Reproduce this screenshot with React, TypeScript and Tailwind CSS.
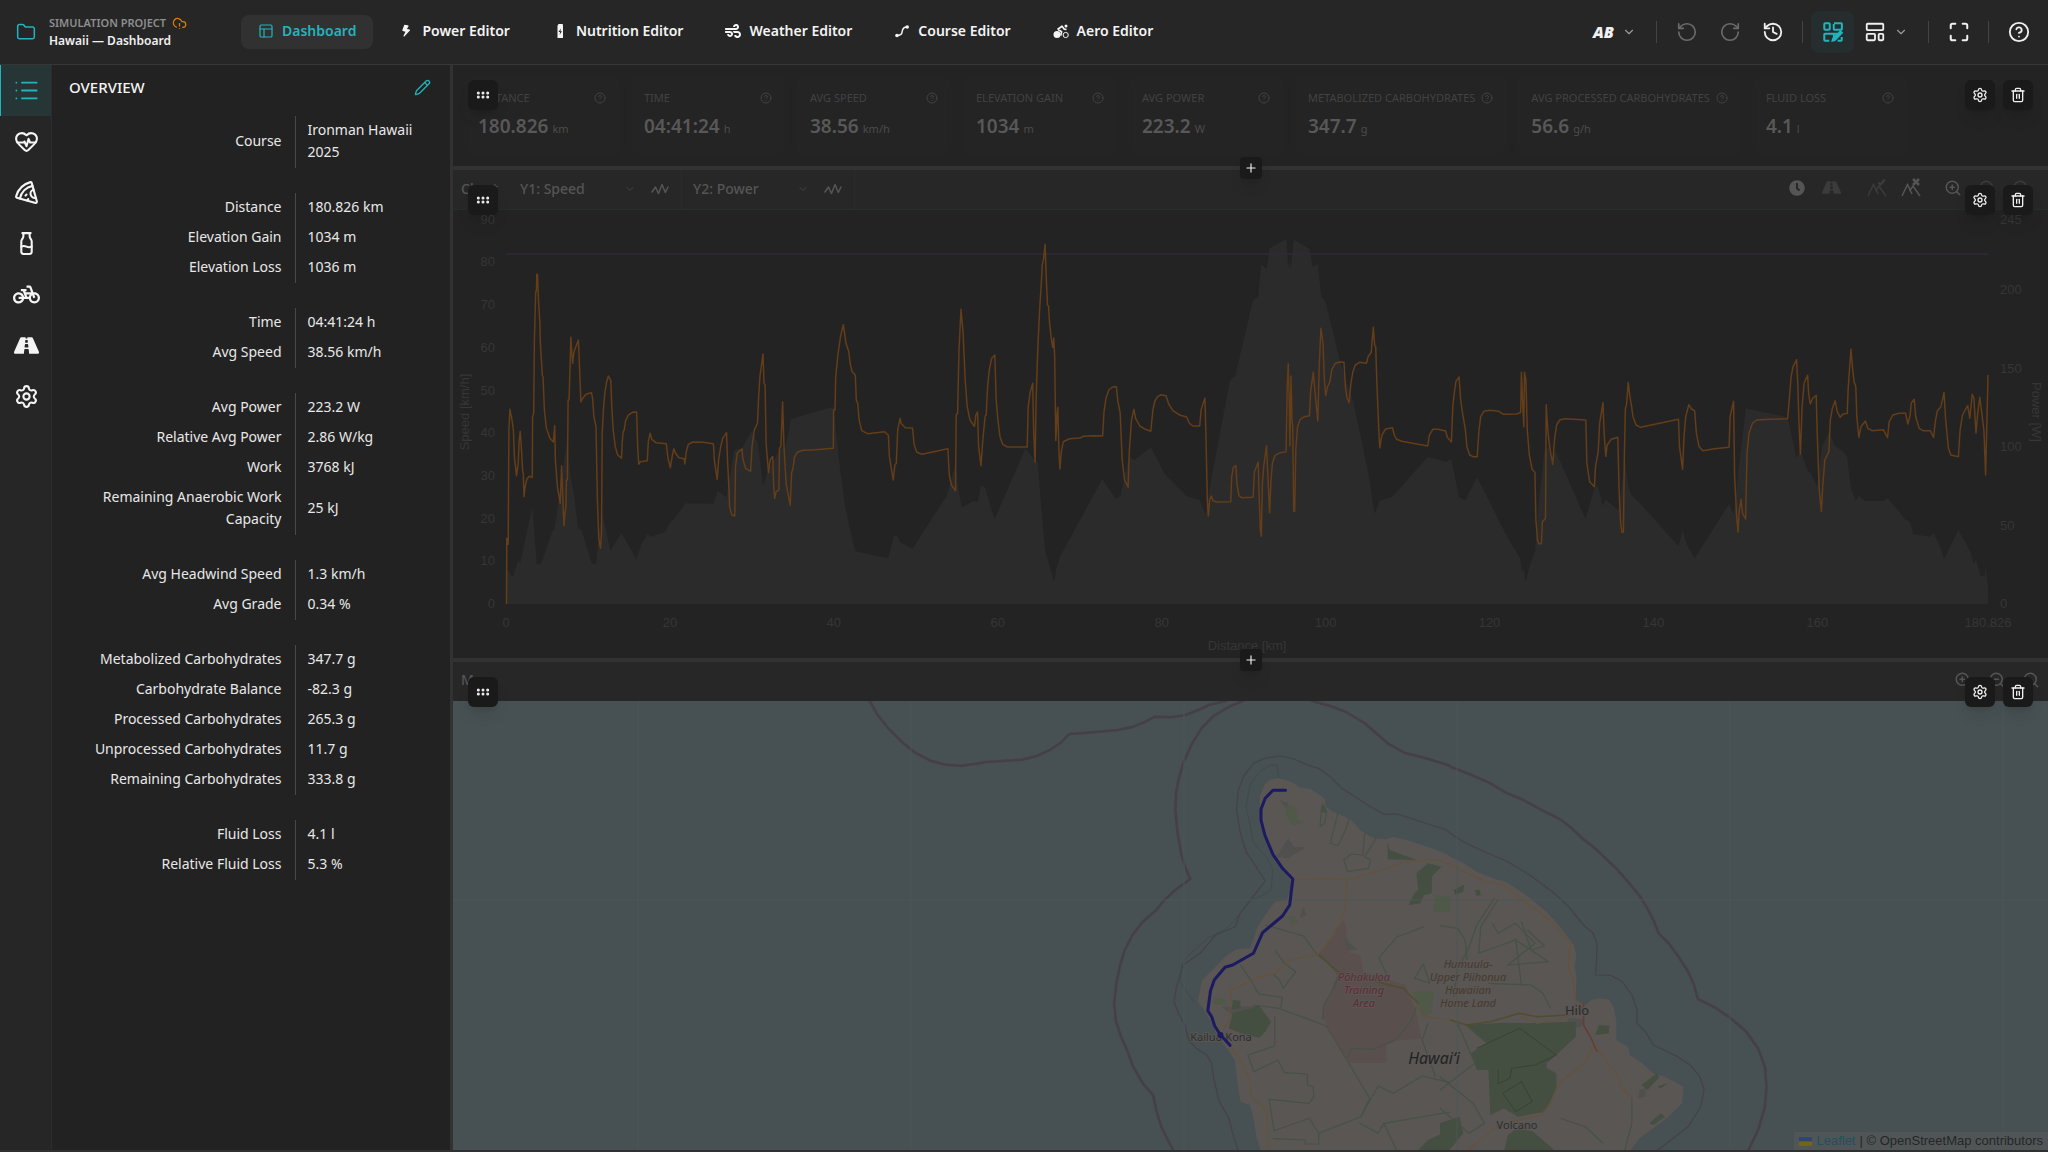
import type { ReactNode } from "react";
import {
  Folder, CloudAlert, PanelsTopLeft, List, HeartPulse, Pizza, Milk, Settings, Pencil, ChevronDown,
  RotateCcw, RotateCw, History, LayoutTemplate, Maximize, CircleHelp, GripHorizontal, Trash2, Plus,
  ZoomIn, ZoomOut, Search,
} from "lucide-react";
import { MdPedalBike } from "react-icons/md";
import { FaRoad, FaBolt, FaWind, FaClock } from "react-icons/fa";

/* ---------- custom icons ---------- */

const BatteryGel = () => (
  <svg viewBox="0 0 16 16" className="size-4">
    <path d="M6 1h5l-.5 1.2h.5v12.8H5.500V2.200h1z" fill="currentColor" />
    <path d="M8.900 5.500 6.500 9h1.600l-.5 2.700L10 8.200H8.400z" fill="#262626" />
  </svg>
);

const RouteIcon = () => (
  <svg viewBox="0 0 16 16" className="size-4" fill="none" stroke="currentColor" strokeWidth="1.500">
    <path d="M3 12.500c4 0 5-1.500 5.200-4C8.500 5.500 9.500 4 13 4" />
    <circle cx="3" cy="12.500" r="1.800" fill="currentColor" stroke="none" />
    <circle cx="13.200" cy="4" r="1.800" fill="currentColor" stroke="none" />
  </svg>
);

const AeroIcon = () => (
  <svg viewBox="0 0 16 16" className="size-4" fill="none" stroke="currentColor">
    <circle cx="4" cy="11.500" r="3.500" fill="currentColor" stroke="none" />
    <circle cx="12.700" cy="12" r="2.600" strokeWidth="1" />
    <circle cx="13" cy="3" r="1.500" fill="currentColor" stroke="none" />
    <path d="m4.500 6.500 4.500-3.300 2.300 3 2.200.3M5 6.500l3.600 2.200-.8 4" strokeWidth="1.700" strokeLinejoin="round" />
  </svg>
);

const EditLayoutIcon = () => (
  <svg viewBox="0 0 24 24" className="size-[22px]" fill="none" stroke="currentColor" strokeWidth="2.200" strokeLinejoin="round">
    <rect x="2.500" y="2.500" width="6" height="7" rx="1" />
    <path d="M13 2.500h8a.7.7 0 0 1 .7.7v5.600a.7.7 0 0 1-.7.7h-7.500a.7.7 0 0 1-.7-.7V3.200" />
    <path d="M17 14H3.200a.7.7 0 0 0-.7.700v6.100c0 .4.300.7.700.7H8M13 14v4M21.500 17.500v3.300a.7.7 0 0 1-.7.700H17" />
    <path d="m10 23 1.200-4.500 9-8.700 3 3-8.700 9z" fill="currentColor" stroke="none" />
  </svg>
);

const ZigZag = () => (
  <svg viewBox="0 0 18 18" className="size-[18px]" fill="none" stroke="currentColor" strokeWidth="1.500" strokeLinejoin="round" strokeLinecap="round">
    <path d="m1 12 3.500-5 3 6.500L11 4.500l3.300 8L17 7" />
  </svg>
);

const Peaks = ({ mark }: { mark: "check" | "cross" }) => (
  <svg viewBox="0 0 20 20" className="mx-auto size-5" fill="none" stroke="currentColor" strokeWidth="1.500">
    <path d="M1 18 6.500 6.500 11 16M8.500 13l3.500-5 7 10" />
    {mark === "check" ? <path d="m11.500 4.500 2 2L18 1.500" strokeWidth="2.500" /> : <path d="m12 1 6 6M18 1l-6 6" strokeWidth="2.500" />}
  </svg>
);

/* ---------- header ---------- */

const navItems: { label: string; icon: ReactNode; active?: boolean }[] = [
  { label: "Dashboard", icon: <PanelsTopLeft className="size-4" strokeWidth={1.8} />, active: true },
  { label: "Power Editor", icon: <FaBolt className="size-3 w-4 rotate-12" /> },
  { label: "Nutrition Editor", icon: <BatteryGel /> },
  { label: "Weather Editor", icon: <FaWind className="size-4" /> },
  { label: "Course Editor", icon: <RouteIcon /> },
  { label: "Aero Editor", icon: <AeroIcon /> },
];

const Divider = () => <span className="mx-2 h-[22px] w-px bg-[#444]" />;

const IconButton = ({ label, children, className = "text-[#f0f0f0]" }: { label: string; children: ReactNode; className?: string }) => (
  <button type="button" aria-label={label} className={`flex h-[42px] w-[43px] items-center justify-center rounded-lg ${className}`}>
    {children}
  </button>
);

const Header = () => (
  <header className="flex h-[65px] shrink-0 items-center border-b border-[#363636] bg-[#262626] pr-2">
    <button type="button" aria-label="Open project" className="ml-4 text-[#22b4bd]">
      <Folder className="size-5" strokeWidth={1.8} />
    </button>
    <div className="ml-[13px] w-48">
      <div className="flex items-center gap-1.5 text-[11px] leading-[18px] font-semibold text-[#8e8e8e]">
        SIMULATION PROJECT
        <CloudAlert className="size-[15px] text-[#e07b00]" />
      </div>
      <div className="text-[12px] leading-[18px] font-semibold text-[#f0f0f0]">Hawaii — Dashboard</div>
    </div>
    <nav className="flex gap-2">
      {navItems.map((n) => (
        <a
          key={n.label}
          href="#"
          className={`flex h-[34px] items-center gap-2 rounded-lg px-[17px] pb-0.5 text-sm font-semibold ${n.active ? "bg-[#313131] text-[#22b4bd]" : "text-[#f4f4f4]"}`}
        >
          {n.icon}
          {n.label}
        </a>
      ))}
    </nav>
    <div className="ml-auto flex items-center">
      <button type="button" aria-label="Compare A and B" className="mr-3 flex items-center gap-2 text-[#f0f0f0]">
        <span className="text-[16px] font-black italic">AB</span>
        <ChevronDown className="size-[14px] text-[#999]" />
      </button>
      <Divider />
      <IconButton label="Undo" className="text-[#6b6b6b]"><RotateCcw className="size-[22px]" strokeWidth={1.8} /></IconButton>
      <IconButton label="Redo" className="text-[#6b6b6b]"><RotateCw className="size-[22px]" strokeWidth={1.8} /></IconButton>
      <IconButton label="History"><History className="size-[22px]" /></IconButton>
      <Divider />
      <IconButton label="Edit layout" className="bg-[#252d2f] text-[#22b4bd]"><EditLayoutIcon /></IconButton>
      <button type="button" aria-label="Choose layout" className="flex items-center gap-2 px-[10px] text-[#f0f0f0]">
        <LayoutTemplate className="size-[22px]" />
        <ChevronDown className="size-[14px] text-[#999]" />
      </button>
      <span className="w-0.5" />
      <Divider />
      <IconButton label="Full screen"><Maximize className="size-[22px]" strokeWidth={2.2} /></IconButton>
      <Divider />
      <IconButton label="Help"><CircleHelp className="size-[22px]" /></IconButton>
    </div>
  </header>
);

/* ---------- sidebar ---------- */

const railItems: { label: string; icon: ReactNode }[] = [
  { label: "Overview", icon: <List className="size-[27px]" strokeWidth={1.6} /> },
  { label: "Athlete", icon: <HeartPulse className="size-[25px]" /> },
  { label: "Nutrition", icon: <Pizza className="size-[25px]" /> },
  { label: "Fluids", icon: <Milk className="size-[25px]" /> },
  { label: "Bike", icon: <MdPedalBike className="size-[27px]" /> },
  { label: "Course", icon: <FaRoad className="size-[25px]" /> },
  { label: "Settings", icon: <Settings className="size-[25px]" /> },
];

const Rail = () => (
  <nav className="w-[52px] shrink-0 border-r border-[#2c2c2c] bg-[#262626]">
    {railItems.map((r, i) => (
      <button
        key={r.label}
        type="button"
        aria-label={r.label}
        className={`flex h-[51px] w-full items-center justify-center border-l ${i === 0 ? "border-[#22b4bd] bg-[#263637] text-[#22b4bd]" : "border-transparent text-[#f4f4f4]"}`}
      >
        {r.icon}
      </button>
    ))}
  </nav>
);

const overview: [string, string][][] = [
  [["Course", "Ironman Hawaii 2025"]],
  [["Distance", "180.826 km"], ["Elevation Gain", "1034 m"], ["Elevation Loss", "1036 m"]],
  [["Time", "04:41:24 h"], ["Avg Speed", "38.56 km/h"]],
  [["Avg Power", "223.2 W"], ["Relative Avg Power", "2.86 W/kg"], ["Work", "3768 kJ"], ["Remaining Anaerobic Work Capacity", "25 kJ"]],
  [["Avg Headwind Speed", "1.3 km/h"], ["Avg Grade", "0.34 %"]],
  [["Metabolized Carbohydrates", "347.7 g"], ["Carbohydrate Balance", "-82.3 g"], ["Processed Carbohydrates", "265.3 g"], ["Unprocessed Carbohydrates", "11.7 g"], ["Remaining Carbohydrates", "333.8 g"]],
  [["Fluid Loss", "4.1 l"], ["Relative Fluid Loss", "5.3 %"]],
];

const Overview = () => (
  <aside className="w-[398px] shrink-0 bg-[#222]">
    <div className="flex h-[51px] items-center justify-between px-[17px] pb-1.5">
      <h2 className="text-[15px] font-medium text-[#f4f4f4]">OVERVIEW</h2>
      <button type="button" aria-label="Edit overview" className="mr-0.5 text-[#22b4bd]">
        <Pencil className="size-[17px]" strokeWidth={1.8} />
      </button>
    </div>
    <div className="flex flex-col gap-[25px] pr-8">
      {overview.map((group) => (
        <table key={group[0][0]} className="w-full table-fixed text-sm leading-[22px] text-[#e8e8e8]">
          <tbody>
            {group.map(([k, v]) => (
              <tr key={k}>
                <th scope="row" className="w-[243px] border-r border-[#484848] pt-[3px] pr-[13px] pb-[5px] pl-[38px] text-right font-normal">{k}</th>
                <td className="pt-[3px] pb-[5px] pl-3 text-left">{v}</td>
              </tr>
            ))}
          </tbody>
        </table>
      ))}
    </div>
  </aside>
);

/* ---------- shared panel controls ---------- */

const floatBtn = "flex size-[30px] items-center justify-center rounded-md bg-[#1a1a1a] text-[#f0f0f0] shadow-lg";

const PanelControls = () => (
  <>
    <button type="button" aria-label="Move panel" className={`absolute top-[15px] left-[15px] ${floatBtn}`}>
      <GripHorizontal className="size-4" strokeWidth={2.5} />
    </button>
    <div className="absolute top-[15px] right-[15px] flex gap-2">
      <button type="button" aria-label="Panel settings" className={floatBtn}><Settings className="size-4" /></button>
      <button type="button" aria-label="Delete panel" className={floatBtn}><Trash2 className="size-4" /></button>
    </div>
  </>
);

const Splitter = () => (
  <div className="relative z-10 h-1 shrink-0 bg-[#323232]">
    <button
      type="button"
      aria-label="Add panel"
      className="absolute -top-[9px] left-1/2 flex size-[22px] -translate-x-1/2 items-center justify-center rounded bg-[#1a1a1a] text-[#f0f0f0] shadow-lg"
    >
      <Plus className="size-[14px]" />
    </button>
  </div>
);

/* ---------- key figures ---------- */

const figures: [string, string, string][] = [
  ["DISTANCE", "180.826", "km"],
  ["TIME", "04:41:24", "h"],
  ["AVG SPEED", "38.56", "km/h"],
  ["ELEVATION GAIN", "1034", "m"],
  ["AVG POWER", "223.2", "W"],
  ["METABOLIZED CARBOHYDRATES", "347.7", "g"],
  ["AVG PROCESSED CARBOHYDRATES", "56.6", "g/h"],
  ["FLUID LOSS", "4.1", "l"],
];

const Figures = () => (
  <section className="relative h-[101px] shrink-0 bg-[#232323] px-3 py-3">
    <div className="flex gap-3">
      {figures.map(([label, value, unit]) => (
        <div key={label} className="h-[77px] min-w-[154px] rounded-md bg-[#242424] px-[13px] pt-3">
          <div className="flex items-center justify-between gap-1.5 text-[11px] leading-[18px] text-[#424242]">
            {label}
            <CircleHelp className="size-3" />
          </div>
          <div className="mt-[7px] flex items-baseline gap-1 text-[19px] leading-6 font-semibold text-[#585858]">
            {value}
            <span className="text-[11px] font-normal text-[#4c4c4c]">{unit}</span>
          </div>
        </div>
      ))}
    </div>
    <PanelControls />
  </section>
);

/* ---------- chart ---------- */

// Turns "x,y x,y ..." samples into canvas points, given an origin and a scale.
const trace = (ox: number, oy: number, sx: number, sy: number, data: string) =>
  data.trim().split(/\s+/).map((p) => {
    const [x, y] = p.split(",").map(Number);
    return `${(ox + x / sx).toFixed(1)},${(oy + y / sy).toFixed(1)}`;
  }).join(" ");
const t = (ox: number, d: string) => trace(ox, 200, 2.904, 3, d);

const speedLine = [
  t(450, "164,1212 165,1015 169,1033 171,690 174,628 180,660 184,690 187,770 193,827 198,790 201,720 204,694 207,740 211,815 213,820 215,890 218,860 223,838 230,829 239,832 240,650 243,640 245,420 249,276 251,274 252,223 254,223 257,300 261,370 262,420 268,525 270,530 274,630 280,685 290,715 300,726 304,677 306,780 312,860 320,910 324,797 328,900 331,977 334,940 337,920 338,840 341,840 343,600 346,600 351,412 353,450 356,490 360,455 373,420 376,500 380,606 384,597 395,583 411,578 414,595 418,650 424,680 428,900 432,1015 437,1045 440,1000 442,700 446,620 450,575 455,545 460,528 467,542 470,620 474,690 480,740 487,765 498,775 500,730 503,695 506,690 510,662 518,645 530,637 542,636 545,740 548,793 553,785 573,782 576,725 581,700 586,718 598,728 628,731 633,775 640,803 645,770 650,746 655,760 665,773 680,776 682,792 686,757 692,733 705,726 735,727 765,731 768,785 776,838 780,780 786,740 792,715 803,698 806,780 810,860 812,920 818,944 827,948 829,800 834,760 848,746 850,775 858,805 873,814 877,740 884,690 893,670 896,600 900,530 909,462 912,550 915,555 918,730 925,818 930,780 937,769 940,860 943,895 947,875 955,870 957,745 961,740 966,606 970,740 976,850 988,916 992,820 997,800 1000,772 1008,757 1025,751 1060,749 1113,745 1114,630 1118,630 1120,530 1127,460 1134,410 1142,374 1150,430 1158,455 1162,490 1168,515 1177,526 1180,600 1184,610 1188,660 1196,692 1212,701 1262,695 1273,706 1276,770 1287,840 1292,795 1296,790 1300,690 1307,655 1310,670 1322,683 1343,684 1348,735 1356,757 1370,763 1446,746 1450,825 1456,855 1468,872 1470,645 1474,640 1478,450 1484,328 1490,400 1496,540 1502,620 1510,660 1523,679 1527,645 1532,636 1535,740"),
  t(980, "3,797 8,720 12,680 15,648 18,645 22,560 27,510 34,475 43,465 47,600 52,660 58,710 66,733 80,741 137,741 140,620 146,575 153,550 156,700 160,787 163,600 166,495 169,420 173,330 178,250 181,195 184,180 189,133 192,220 196,315 199,318 202,370 207,415 211,442 214,414 217,470 220,722 224,640 226,622 229,750 232,807 236,755 242,725 260,716 290,714 300,709 330,707 356,708 360,635 366,595 374,570 385,561 396,560 400,600 407,640 413,780 420,840 430,862 434,750 440,660 447,628 452,655 464,678 480,688 496,694 502,630 508,603 516,590 525,584 540,587 548,612 560,632 580,645 600,651 608,670 618,678 638,678 642,630 653,595 656,700 660,900 663,948 667,900 672,888 677,903 690,906 728,905 731,830 736,802 743,797 746,850 752,887 760,893 793,892 797,815 808,787 811,900 814,990 817,1009 820,850 824,800 832,737 836,830 841,938 845,840 849,790 857,766 872,758 889,755 892,560 895,491 898,600 900,737 903,528 906,660 908,680 911,934 914,934 917,750 922,680 930,658 942,650 957,647 960,575 968,517 973,580 981,663 985,500 990,385 996,430 1000,540 1004,587 1009,560 1016,545 1022,508 1032,490 1045,486 1057,487 1061,560 1066,595 1072,608 1077,550 1083,515 1090,495 1102,487 1122,490 1127,470 1136,457 1142,382 1146,435 1149,440 1153,560 1158,690 1161,744 1167,705 1178,687 1198,683 1203,705 1210,718 1225,724 1300,738 1305,705 1315,688 1330,688 1352,693 1357,712 1369,726 1373,620 1377,580 1382,545 1391,531 1396,600 1402,645 1409,685 1414,740 1422,765 1432,770 1444,770 1449,690 1454,650 1463,634 1480,631 1507,634 1520,643"),
  t(1508, "0,643 25,642 37,637 39,517 43,620 46,680 48,517 52,540 56,690 62,765 70,808 78,817 81,960 86,1022 90,1031 97,1031 100,965 109,955 111,614 115,680 118,715 124,760 130,793 135,720 141,675 150,660 165,656 226,660 229,790 237,845 251,860 254,800 262,755 266,670 276,608 279,700 284,769 288,735 300,718 319,712 323,880 327,970 331,997 335,997 338,760 341,625 344,615 349,547 354,590 359,620 363,650 372,675 385,682 495,658 498,740 507,808 511,710 516,650 525,614 533,627 542,632 547,700 555,740 566,752 600,746 642,742 645,650 655,604 658,830 664,950 668,997 671,935 677,898 681,940 690,957 694,760 700,700 710,670 722,660 760,658 812,656 816,610 822,530 828,500 838,479 842,560 845,670 849,762 854,620 860,550 870,526 873,580 878,612 885,595 895,586 898,700 904,870 910,935 914,860 920,780 932,755 936,660 942,625 950,602 956,635 965,652 972,643 985,640 988,565 996,447 1000,500 1005,545 1010,560 1013,650 1019,712 1025,680 1038,663 1045,685 1057,692 1090,689 1102,713 1107,665 1118,645 1135,640 1155,640 1161,672 1168,645 1171,610 1180,598 1184,650 1194,685 1205,692 1226,692 1236,712 1241,665 1247,632 1257,620 1266,577 1271,660 1279,745 1286,765 1308,770 1313,690 1320,645 1335,617 1341,655 1348,583 1353,595 1359,700 1364,640 1370,592 1377,650 1382,690 1387,825 1391,655 1394,525"),
].join(" ");

const elevation = [
  t(450, "164,1212 164,1110 172,1115 178,1128 183,1128 198,1080 204,1090 239,920 252,1093 264,1093 297,995 304,985 318,880 340,720 350,830 358,870 372,985 382,990 412,1090 424,1092 432,1000 442,940 466,1052 498,998 541,1078 555,1035 573,1003 582,1010 625,996 640,965 650,958 684,910 765,911 778,872 803,892 825,750 848,745 877,690 895,735 909,856 925,810 937,790 955,750 975,740 990,657 1113,620 1130,780 1145,905 1162,990 1177,1053 1250,1070 1273,1074 1288,1010 1296,1003 1307,1027 1343,1046 1444,885 1468,790 1474,850 1486,922 1523,902 1532,907"),
  t(980, "3,857 14,860 42,958 132,745 150,770 168,790 176,900 189,1050 215,1145 222,1105 232,1070 355,838 395,897 408,888 432,770 448,780 496,742 537,822 600,888 638,900 655,943 662,890 726,540 741,528 793,300 808,292 817,193 833,208 841,145 886,119 890,119 895,205 898,178 902,210 911,119 957,147 966,200 981,193 991,290 1003,303 1045,480 1060,530 1085,610 1128,820 1146,942 1161,902 1198,890 1300,770 1352,786 1369,778 1391,892 1409,901 1444,832 1507,962"),
  t(1508, "0,1015 35,1075 41,1115 46,1108 51,1148 62,1100 78,1055 90,900 106,750 118,740 130,770 138,752 225,957 252,860 262,862 275,918 283,898 320,930 340,790 350,860 358,885 385,912 495,1038 507,992 520,1035 542,1075 642,912 656,945 668,820 691,625 812,652 838,775 849,750 870,812 880,820 897,860 912,740 932,695 950,738 975,755 985,772 996,865 1010,902 1019,887 1038,903 1092,902 1102,893 1155,960 1165,962 1178,1003 1226,1010 1236,1000 1257,1045 1266,1078 1308,990 1343,1055 1352,1090 1360,1080 1372,1127 1384,1130 1387,1100 1394,1160 1394,1212"),
].join(" ");

const Chart = () => (
  <svg viewBox="453 210 1595 448" className="block w-full" fontFamily='"Liberation Sans", Arial, sans-serif' fontSize="13" fill="#363636">
    <polygon points={elevation} fill="#2b2b2b" />
    <line x1="506" x2="1988" y1="254" y2="254" stroke="#33283a" strokeWidth="1.500" />
    <polyline points={speedLine} fill="none" stroke="#643d19" strokeWidth="1.500" strokeLinejoin="round" />
    {[0, 10, 20, 30, 40, 50, 60, 70, 80, 90].map((v) => (
      <text key={v} x="495" y={608 - v * 4.27} textAnchor="end">{v}</text>
    ))}
    {[0, 50, 100, 150, 200, 245].map((v) => (
      <text key={v} x="2000" y={608 - v * 1.569}>{v}</text>
    ))}
    {[0, 20, 40, 60, 80, 100, 120, 140, 160, 180.826].map((v) => (
      <text key={v} x={506 + v * 8.196} y="627" textAnchor="middle">{v}</text>
    ))}
    <text x="1247" y="650" textAnchor="middle">Distance [km]</text>
    <text transform="translate(469 412) rotate(-90)" textAnchor="middle">Speed [km/h]</text>
    <text transform="translate(2032 412) rotate(90)" textAnchor="middle">Power [W]</text>
  </svg>
);

const AxisSelect = ({ id, label }: { id: string; label: string }) => (
  <div className="flex items-center gap-[15px] border-r border-[#2b2b2b] pr-3 pb-0.5 pl-[11px]">
    <div className="relative flex w-[116px] items-center">
      <label htmlFor={id} className="sr-only">Series {id}</label>
      <select id={id} className="h-7 w-full appearance-none bg-transparent text-sm font-medium text-[#555]">
        <option>{label}</option>
      </select>
      <ChevronDown className="pointer-events-none absolute right-0 size-3 text-[#444]" />
    </div>
    <button type="button" aria-label={`Line style ${id}`} className="text-[#555]"><ZigZag /></button>
  </div>
);

const ChartPanel = () => (
  <section className="relative shrink-0 bg-[#232323]">
    <div className="flex h-10 items-stretch border-b border-[#262d2d] bg-[#272727] pr-[10px] pl-2">
      <h2 className="flex w-12 items-center pb-0.5 text-sm font-medium text-[#555]">Chart</h2>
      <AxisSelect id="y1" label="Y1: Speed" />
      <AxisSelect id="y2" label="Y2: Power" />
      <div className="ml-auto flex items-center pb-1 text-[#555]">
        <button type="button" aria-label="By time" className="w-[34px]"><FaClock className="mx-auto size-4" /></button>
        <button type="button" aria-label="By distance" className="w-[34px] text-[#3b3b3b]"><FaRoad className="mx-auto size-[19px]" /></button>
        <span className="w-3" />
        <button type="button" aria-label="Show elevation" className="w-[34px] text-[#3b3b3b]"><Peaks mark="check" /></button>
        <button type="button" aria-label="Hide elevation" className="w-[34px]"><Peaks mark="cross" /></button>
        <span className="w-2" />
        <button type="button" aria-label="Zoom in" className="w-[34px]"><ZoomIn className="mx-auto size-[18px]" /></button>
        <button type="button" aria-label="Zoom out" className="w-[34px] text-[#3b3b3b]"><ZoomOut className="mx-auto size-[18px]" /></button>
        <button type="button" aria-label="Reset zoom" className="w-[34px] text-[#3b3b3b]"><Search className="mx-auto size-[18px]" /></button>
      </div>
    </div>
    <Chart />
    <PanelControls />
  </section>
);

/* ---------- map ---------- */

const w = (d: string) => trace(850, 660, 2.613, 3, d);
const e = (d: string) => trace(1440, 660, 2.579, 3, d);

const land = w("1118,355 1135,358 1160,370 1175,382 1205,388 1240,415 1243,440 1262,455 1290,468 1310,480 1335,512 1375,535 1400,538 1420,530 1470,545 1520,565 1560,582") + " " +
  e("26,590 60,608 95,635 145,658 170,665 190,680 230,712 275,755 310,800 345,855 352,885 347,920 352,950 350,1020 375,1035 390,1020 410,1015 435,1018 447,1040 455,1080 455,1140 485,1160 490,1185 520,1208 550,1240 575,1248 605,1265 628,1280 625,1330 605,1352 590,1370 550,1405 515,1435 485,1480") + " " +
  w("1075,1480 1062,1430 1055,1380 1045,1335 1020,1325 1012,1265 1005,1200 985,1165 960,1130 945,1090 925,1050 908,1025 920,960 955,920 985,885 1010,868 1045,865 1065,800 1085,765 1110,725 1140,720 1152,690 1150,660 1125,620 1100,580 1085,530 1072,480 1070,410 1085,370 1100,358");

const thickBorders = [
  w("50,120 72,165 100,205 135,245 170,278 210,302 250,314 290,317 330,311 355,306 400,303 450,299 490,287 525,268 550,249 573,222 620,218 700,210 740,200 770,186 797,170 840,172 880,164 910,150 940,134 985,122"),
  w("1030,122 990,140 950,168 920,203 895,248 872,305 858,360 852,400 850,450 856,520 866,585 876,620 889,657 850,690 820,722 800,750 765,785 738,825 718,870 706,915 696,970 690,1030 695,1085 708,1130 722,1165 740,1220 765,1270 792,1305 800,1350 815,1405 845,1472"),
  w("1205,122 1255,138 1300,158 1345,190 1375,220 1405,250 1450,279 1500,293 1568,317") + " " +
    e("26,320 75,342 125,367 170,398 215,420 265,452 310,478 335,500 365,533 395,560 425,593 460,632 490,673 515,708 535,745 550,780 564,820 590,850 615,890 640,935 655,975 665,1017 710,1043 750,1075 790,1115 820,1165 838,1220 842,1280 838,1340 822,1405 795,1472"),
];

const thinBorders = [
  w("1015,1476 1000,1420 990,1375 965,1325 950,1255 945,1210 932,1185 905,1165 885,1140 875,1095 858,1060 847,1025 852,985 870,915 915,880 955,825 1007,800 1018,762 1050,715 1085,663 1062,622 1035,575 1020,520 1010,450 1015,390 1030,345 1055,310 1085,294 1125,288 1160,297 1200,317 1225,325 1255,350 1285,385 1310,403 1360,440 1395,463 1430,462 1500,488 1560,510") + " " +
    e("26,520 60,545 110,573 175,605 235,648 290,695 330,738 370,795 395,820 405,850 404,900 401,945 440,946 470,965 495,1005 508,1050 508,1090 530,1115 550,1155 610,1188 645,1215 670,1250 681,1290 672,1340 640,1400 560,1472"),
];

const seaGreen = [
  w("1120,355 1116,316 1098,315 1070,335 1045,375 1035,440 1048,510 1052,545 1090,595 1105,630 1100,690 1080,705 1045,722 1010,775 980,808 935,835 890,880 868,910 862,965 900,1027"),
];

const greenLines = [
  w("1085,795 1185,828 1220,883 1275,935"),
  w("1020,915 1050,965 1068,1002 1130,1012 1125,1045"),
  w("1055,1035 1120,1045 1245,1098 1358,1315 1335,1370"),
  w("1110,870 1135,910 1165,935 1132,985 1122,960 1105,940"),
  w("1110,1070 1110,1158 1040,1185 1055,1235 1118,1200 1135,1238 1195,1242 1195,1275 1210,1280 1212,1310 1200,1330 1095,1318 1108,1412 1200,1375 1225,1420 1335,1370 1380,1278 1420,1300 1495,1248 1568,1268"),
  w("1105,1436 1190,1440 1190,1452 1225,1452 1225,1420"),
  w("1330,1388 1380,1420 1395,1390 1568,1356"),
  w("1395,1390 1430,1476"),
  w("1235,1080 1238,1035 1265,985 1280,935"),
  w("1300,1195 1310,1165 1370,1168 1430,1135 1465,1085 1480,1040"),
  w("1500,800 1430,830 1382,893 1405,950"),
  w("1498,912 1475,955 1515,970 1498,912"),
  w("1510,1090 1495,1140 1530,1250"),
  w("1228,500 1232,440 1245,460 1240,490 1228,500"),
  w("1275,460 1255,550 1275,557 1295,510 1305,475"),
  w("1345,518 1340,585 1310,582 1290,600 1300,635 1355,625 1360,600 1345,590 1375,535 1345,518"),
  e("0,797 45,805 65,840 70,900"),
  e("140,715 95,795 75,860 45,930 35,1010"),
  e("150,718 105,800 100,880 195,840 280,905 175,915 245,850 195,790 150,820 135,790"),
  e("210,785 235,870 270,858 225,810"),
  e("125,970 235,975 265,1000 285,1045"),
  e("195,835 210,975"),
  e("45,1090 90,1210 0,1290"),
  e("0,1250 85,1330 115,1390 75,1420 0,1345"),
  e("310,1375 375,1400 420,1450"),
  e("495,1312 495,1390 475,1476"),
];

const forests = [
  e("65,1095 170,1088 230,1090 350,1085 350,1130 300,1185 275,1210 275,1225 300,1240 300,1290 270,1355 200,1370 165,1345 130,1365 125,1230 95,1230 80,1180 120,1150"),
  w("1000,1060 1050,1045 1068,1035 1100,1085 1085,1115 1070,1133 1020,1120 990,1105"),
  w("1510,610 1545,620 1520,650 1520,700 1500,705 1490,730 1460,735 1475,700 1485,690 1480,640"),
  w("1000,1020 1020,1022 1020,1045 998,1048"),
  w("1568,1410 1510,1440 1480,1476 1568,1476"),
  w("1235,430 1248,455 1232,458"),
  e("0,1390 50,1370 60,1420 20,1476 0,1476"),
  e("410,1095 437,1098 435,1120 400,1125"),
  e("200,1405 240,1415 300,1476 165,1476 175,1425"),
  e("540,1390 570,1360 580,1370 550,1395"),
  e("35,690 62,675 60,695 40,705"),
  e("90,690 103,690 105,705 95,708"),
  w("1405,545 1410,570 1480,600 1405,598"),
  e("520,1275 560,1240 565,1252 535,1290"),
  e("560,1280 588,1268 570,1285"),
];

const lightGreens = [
  w("1138,430 1165,445 1170,480 1188,487 1155,498 1140,465"),
  w("1530,705 1568,710 1568,755 1523,753"),
  w("1470,995 1525,995 1520,1060 1495,1070"),
  w("950,1012 985,1020 980,1035 950,1030"),
  w("1145,772 1160,768 1170,785 1155,798"),
];

const greys = [
  w("1145,535 1160,560 1190,562 1145,595 1115,590"),
  w("1122,420 1145,430 1140,445"),
  w("1185,740 1192,765 1175,775"),
  w("1290,830 1325,870 1300,870"),
  e("330,1075 370,1078 365,1100 325,1105"),
  e("515,1290 530,1285 530,1310 510,1315"),
  w("970,1040 1060,1038 1040,1060 1000,1065"),
];

const roads = [
  w("1157,660 1250,655 1300,660 1390,630 1450,605 1530,600 1560,610") + " " + e("26,612 70,640 120,665 165,675 230,735 290,785 335,850 332,920 345,970 348,1020 370,1040"),
  w("1300,660 1293,750 1265,820 1225,883 1150,900 1110,940 1060,955 995,990 992,1080 975,1110"),
  w("993,1156 1025,1210 1045,1260 1050,1310 1090,1355 1092,1476"),
  w("1485,1030 1495,1070 1568,1080"),
  e("395,1160 375,1210 305,1270 285,1330 260,1365 150,1395 70,1472"),
  e("400,1160 460,1250 470,1285 495,1312"),
  e("370,1040 310,1080 250,1090 210,1070"),
];

const mapLabels: { x: number; y: number; size: number; fill: string; italic?: boolean; lines: string[] }[] = [
  { x: 1221, y: 1041, size: 11, fill: "#2e2e2e", lines: ["Kailua-Kona"] },
  { x: 1364, y: 981, size: 11, fill: "#5f2c33", italic: true, lines: ["Pōhakuloa", "Training", "Area"] },
  { x: 1468, y: 968, size: 11, fill: "#47392e", italic: true, lines: ["Humuula-", "Upper Piihonua", "Hawaiian", "Home Land"] },
  { x: 1434, y: 1064, size: 16, fill: "#222", italic: true, lines: ["Hawaiʻi"] },
  { x: 1577, y: 1015, size: 13, fill: "#2a2a2a", lines: ["Hilo"] },
  { x: 1517, y: 1129, size: 11, fill: "#2e2e2e", lines: ["Volcano"] },
];

const HawaiiMap = () => (
  <svg viewBox="453 701 1595 449" preserveAspectRatio="xMidYMid slice" className="absolute inset-0 size-full" fill="none" strokeLinejoin="round">
    <rect x="453" y="701" width="1595" height="449" fill="#475052" />
    <polygon points={land} fill="#595654" />
    <polygon points={w("1290,780 1305,880 1332,887 1340,935 1420,965 1450,975 1475,1045 1492,1135 1430,1140 1400,1155 1400,1207 1303,1207 1245,1095 1235,1060 1255,1000 1275,945 1228,883")} fill="#59504e" stroke="#604d4c" />
    {lightGreens.map((p) => <polygon key={p} points={p} fill="#505848" />)}
    {greys.map((p) => <polygon key={p} points={p} fill="#50504f" />)}
    {forests.map((p) => <polygon key={p} points={p} fill="#444e41" />)}
    {greenLines.map((p) => <polyline key={p} points={p} stroke="#465244" strokeWidth="1.200" />)}
    {roads.map((p) => <polyline key={p} points={p} stroke="#66523a" strokeWidth="1.200" />)}
    <polyline points={w("1225,883 1275,935 1390,970 1445,985 1485,1030")} stroke="#504d2f" strokeWidth="1.500" />
    <polyline points={w("1568,1080") + " " + e("70,1095 130,1085 205,1060 250,1070 330,1065")} stroke="#504d2f" strokeWidth="1.500" />
    <polyline points={e("370,1030 370,1095 390,1135 405,1175")} stroke="#663c34" strokeWidth="1.500" />
    <polyline points={e("95,1165 205,1105 300,1185 245,1215 185,1225 180,1255 150,1272 150,1230")} stroke="#37442f" />
    <polygon points={e("210,1265 238,1325 195,1355 162,1300")} stroke="#37442f" />
    {seaGreen.map((p) => <polyline key={p} points={p} stroke="#3d4c49" />)}
    {thickBorders.map((p) => <polyline key={p} points={p} stroke="#453f46" strokeWidth="2.500" />)}
    {thinBorders.map((p) => <polyline key={p} points={p} stroke="#454249" strokeWidth="1.200" />)}
    <path d="M638 701v449M911 701v449M1184 701v449M1457 701v449M1730 701v449M2003 701v449M453 900h1595" stroke="#4c5757" />
    {mapLabels.map((l) => (
      <text
        key={l.lines[0]}
        fill={l.fill}
        fontSize={l.size}
        fontStyle={l.italic ? "italic" : "normal"}
        textAnchor="middle"
        stroke="#595654"
        strokeWidth="2"
        paintOrder="stroke"
      >
        {l.lines.map((s, i) => <tspan key={s} x={l.x} y={l.y + i * 13}>{s}</tspan>)}
      </text>
    ))}
    <polyline
      points={w("1138,391 1105,391 1085,415 1074,448 1074,480 1084,525 1105,583 1130,625 1157,657 1149,735 1130,768 1078,818 1054,880 1000,915 980,922 952,960 942,992 935,1052 945,1070 953,1098 968,1125 993,1156")}
      stroke="#1c1a60"
      strokeWidth="3"
      strokeLinecap="round"
    />
    <circle cx="1220.500" cy="1035" r="3" fill="#1c1a60" />
  </svg>
);

const MapPanel = () => (
  <section className="relative flex min-h-80 flex-1 flex-col">
    <div className="flex h-[39px] shrink-0 items-center justify-between bg-[#272727] pb-1 pl-2 text-[#555]">
      <h2 className="text-sm font-medium">Map</h2>
      <div className="flex">
        <button type="button" aria-label="Zoom map in" className="w-[34px]"><ZoomIn className="mx-auto size-[18px]" /></button>
        <button type="button" aria-label="Zoom map out" className="w-[34px]"><ZoomOut className="mx-auto size-[18px]" /></button>
        <button type="button" aria-label="Fit route" className="w-[34px]"><Search className="mx-auto size-[18px]" /></button>
      </div>
    </div>
    <div className="relative flex-1 overflow-hidden">
      <HawaiiMap />
      <div className="absolute right-0 bottom-0 flex items-center gap-1 bg-[#505657] px-[5px] font-['Liberation_Sans',Arial,sans-serif] text-[13px] leading-[18px] text-[#262626]">
        <svg viewBox="0 0 12 8" className="h-[9px] w-[13px]"><path d="M0 0h12v4H0z" fill="#2f4473" /><path d="M0 4h12v4H0z" fill="#73661a" /></svg>
        <a href="#" className="text-[#22505f]">Leaflet</a>
        <span>| © OpenStreetMap contributors</span>
      </div>
    </div>
    <PanelControls />
  </section>
);

export default function App() {
  return (
    <div className="flex h-screen flex-col bg-[#222] font-['Noto_Sans',sans-serif]">
      <Header />
      <div className="flex min-h-0 flex-1 border-b-2 border-[#303030]">
        <Rail />
        <Overview />
        <main className="flex min-w-0 flex-1 flex-col overflow-hidden border-l-[3px] border-[#323232]">
          <Figures />
          <Splitter />
          <ChartPanel />
          <Splitter />
          <MapPanel />
        </main>
      </div>
    </div>
  );
}
